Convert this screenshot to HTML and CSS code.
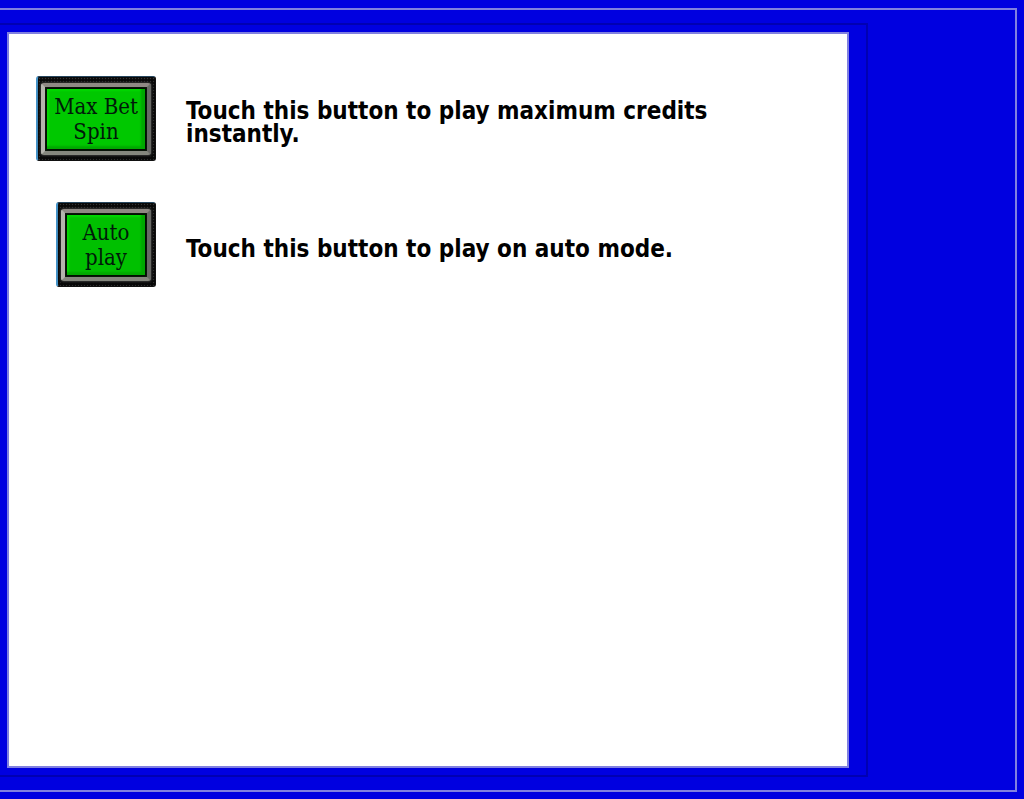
FILE: index.html
```html
<!DOCTYPE html>
<html lang="en">
<head>
<meta charset="utf-8">
<title>Button help</title>
<link rel="stylesheet" href="styles.css">
</head>
<body>
<div class="frame">
  <div class="shade">
    <main class="panel">
      <div class="entry">
        <button class="key key-wide" type="button" aria-describedby="max-help"><span class="bezel"><span class="face">Max Bet<br>Spin</span></span></button>
        <p class="help" id="max-help">Touch this button to play maximum credits instantly.</p>
      </div>
      <div class="entry">
        <button class="key" type="button" aria-describedby="auto-help"><span class="bezel"><span class="face face-dim">Auto<br>play</span></span></button>
        <p class="help" id="auto-help">Touch this button to play on auto mode.</p>
      </div>
    </main>
  </div>
</div>
</body>
</html>
```
FILE: styles.css
```css
* { box-sizing: border-box; }
body {
  margin: 0;
  min-height: 100vh;
  display: flex;
  padding: 8px 7px 7px 0;
  background: #0000e0;
}
.frame {
  flex: 1;
  display: flex;
  border: 2px solid #8080e0;
  border-left: 0;
  padding: 13px 147px 13px 0;
}
.shade {
  flex: 1;
  display: flex;
  border: 2px solid #0000b2;
  border-left: 0;
  padding: 7px 17px 7px 7px;
}
.panel {
  flex: 1;
  display: flex;
  flex-direction: column;
  gap: 41px;
  border: 2px solid #8080e0;
  padding: 42px 100px 42px 27px;
  background: #fff;
}
.entry {
  display: grid;
  grid-template-columns: 120px 1fr;
  column-gap: 30px;
  align-items: center;
}
.key {
  justify-self: end;
  display: flex;
  width: 100px;
  height: 85px;
  border: 1px solid #111;
  border-top-color: #26465e;
  border-left: 2px solid #4593c8;
  border-radius: 3px;
  padding: 6px 4px 5px 3px;
  background:
    radial-gradient(circle, #333 20%, transparent 50%) right top / 3px 3px,
    #080808;
  cursor: pointer;
}
.key-wide { width: 120px; }
.bezel {
  flex: 1;
  display: flex;
  border: 4px solid;
  border-color: #8f8984 #686965 #85877e #b4b4ad;
  border-radius: 3px;
  background: #001000;
  padding: 2px;
  box-shadow: inset 0 0 2px #222, 0 0 2px 1px #333, 0 2px 2px 1px #080808, -2px 0 2px #080808;
}
.face {
  flex: 1;
  display: flex;
  align-items: center;
  justify-content: center;
  background: #00c800;
  box-shadow: inset -4px -3px 2px #00a800, inset 2px 2px 2px #00d800;
  color: #001a0a;
  font: 22px/25px "DejaVu Serif Condensed", "DejaVu Serif", serif;
  text-align: center;
  white-space: nowrap;
}
.face-dim { background: #00c000; }
.help {
  margin: 0;
  padding-top: 9px;
  color: #000;
  font: bold 24px/23px "DejaVu Sans Condensed", "DejaVu Sans", sans-serif;
}
```
